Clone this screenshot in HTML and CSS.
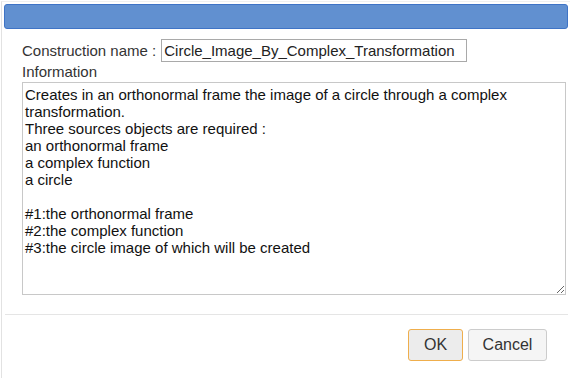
FILE: index.html
```html
<!DOCTYPE html>
<html>
<head>
<meta charset="utf-8">
<link rel="stylesheet" href="styles.css">
</head>
<body>
<div class="dialog">
  <div class="titlebar"></div>
  <div class="content">
    <div class="name-row">
      <label class="label">Construction name :</label>
      <input class="name-input" type="text" value="Circle_Image_By_Complex_Transformation">
    </div>
    <div class="info-label">Information</div>
    <textarea class="info">Creates in an orthonormal frame the image of a circle through a complex transformation.
Three sources objects are required :
an orthonormal frame
a complex function
a circle

#1:the orthonormal frame
#2:the complex function
#3:the circle image of which will be created</textarea>
  </div>
  <div class="footer">
    <button class="btn btn-ok">OK</button>
    <button class="btn btn-cancel">Cancel</button>
  </div>
</div>
</body>
</html>
```
FILE: styles.css
```css
html, body {
  margin: 0;
  padding: 0;
  background: #ffffff;
}
body {
  font-family: "Liberation Sans", Arial, sans-serif;
  font-size: 15px;
  color: #333333;
  padding-left: 1px;
  padding-top: 1px;
}
.dialog {
  height: 377px;
  box-sizing: border-box;
  border-left: 1px solid #e2e2e2;
  border-top: 1px solid #f0f0f0;
  display: flex;
  flex-direction: column;
}
.titlebar {
  margin: 2px 2px 0 2px;
  height: 25px;
  box-sizing: border-box;
  background: #6190d0;
  border: 1px solid #3f74c6;
  border-radius: 3px;
}
.content {
  padding: 9px 4px 0 20px;
  display: flex;
  flex-direction: column;
}
.name-row {
  display: flex;
  align-items: center;
  height: 24px;
}
.label {
  margin-right: 5px;
}
.name-input {
  width: 306px;
  height: 23px;
  box-sizing: border-box;
  border: 1px solid #a9a9a9;
  padding: 0 3px 0 2px;
  font-family: "Liberation Sans", Arial, sans-serif;
  font-size: 15px;
  color: #222;
  outline: none;
}
.info-label {
  margin-top: 1px;
  height: 18px;
  line-height: 18px;
}
.info {
  margin-top: 1px;
  width: 544px;
  height: 213px;
  box-sizing: border-box;
  border: 1px solid #c8c8c8;
  padding: 3px 2px;
  font-family: "Liberation Sans", Arial, sans-serif;
  font-size: 15px;
  line-height: 17px;
  color: #111;
  resize: both;
  outline: none;
}
.footer {
  margin: 19px 2px 0 3px;
  border-top: 1px solid #e5e5e5;
  padding: 14px 21px 0 0;
  display: flex;
  justify-content: flex-end;
  gap: 5px;
}
.btn {
  height: 32px;
  box-sizing: border-box;
  border-radius: 3px;
  font-family: "Liberation Sans", Arial, sans-serif;
  font-size: 16px;
  color: #333;
  padding: 0;
}
.btn-ok {
  width: 55px;
  background: #ececec;
  border: 1px solid #efae4c;
}
.btn-cancel {
  width: 79px;
  background: #f5f5f5;
  border: 1px solid #cccccc;
}
```
